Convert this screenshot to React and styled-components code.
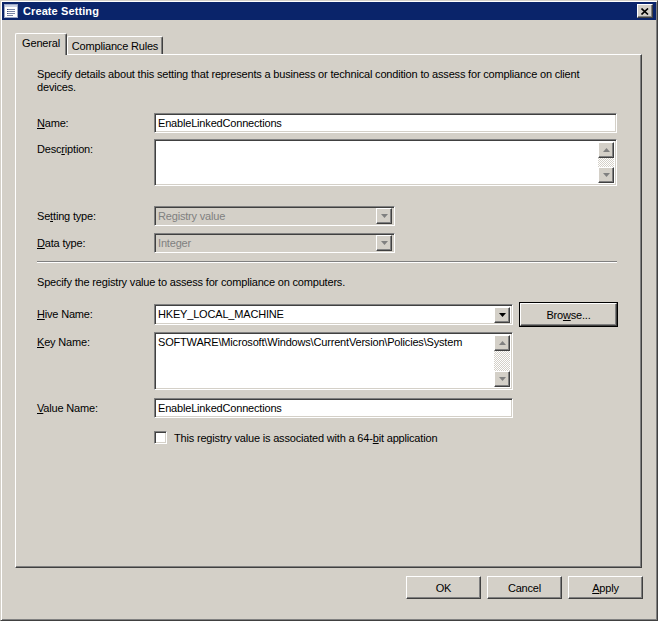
import React from 'react'
import styled, { createGlobalStyle, css } from 'styled-components'

const Global = createGlobalStyle`
  html, body { margin: 0; padding: 0; background: #d4d0c8; }
  body {
    font-family: "Liberation Sans", Arial, sans-serif;
    font-size: 11px;
    letter-spacing: -0.18px;
    color: #000;
  }
`;

const face = '#d4d0c8';

const raised = css`
  background: ${face};
  border: 1px solid;
  border-color: #fff #404040 #404040 #fff;
  box-shadow: inset -1px -1px #808080;
`;

const sunken = css`
  border: 1px solid;
  border-color: #808080 #fff #fff #808080;
  box-shadow: inset 1px 1px #404040, inset -1px -1px ${face};
`;

const Window = styled.div`
  box-sizing: border-box;
  width: 658px;
  height: 621px;
  padding: 1px;
  background: ${face};
  border: 1px solid;
  border-color: ${face} #404040 #404040 ${face};
  box-shadow: inset 1px 1px #fff, inset -1px -1px #808080;
  display: flex;
  flex-direction: column;
`;

const TitleBar = styled.div`
  height: 18px;
  background: #0a246a;
  display: flex;
  align-items: center;
  padding: 0 3px 0 2px;
  color: #fff;
  font-weight: bold;
  font-size: 11px;
  gap: 5px;
`;

const Title = styled.span`
  flex: 1;
  letter-spacing: 0.1px;
`;

const CloseButton = styled.div`
  ${raised};
  box-sizing: border-box;
  width: 16px;
  height: 14px;
  display: flex;
  align-items: center;
  justify-content: center;
`;

const Body = styled.div`
  flex: 1;
  display: flex;
  flex-direction: column;
  padding: 13px 14px 0 13px;
`;

const TabStrip = styled.div`
  display: flex;
  align-items: flex-end;
  height: 21px;
  position: relative;
  z-index: 1;
`;

const Tab = styled.div`
  box-sizing: border-box;
  width: ${p => p.$w}px;
  height: ${p => (p.$active ? 22 : 18)}px;
  margin-bottom: ${p => (p.$active ? -1 : 0)}px;
  background: ${face};
  border-left: 1px solid #fff;
  border-top: 1px solid #fff;
  border-right: 1px solid #404040;
  border-radius: 2px 2px 0 0;
  box-shadow: inset -1px 0 #808080;
  display: flex;
  align-items: ${p => (p.$active ? 'flex-start' : 'center')};
  padding-top: ${p => (p.$active ? 3 : 0)}px;
  justify-content: center;
  white-space: nowrap;
`;

const Panel = styled.div`
  flex: 1;
  box-sizing: border-box;
  border: 1px solid;
  border-color: #fff #404040 #404040 #fff;
  box-shadow: inset -1px -1px #808080;
  padding: 13px 24px 0 21px;
  display: flex;
  flex-direction: column;
`;

const Text = styled.div`
  line-height: 13px;
  margin-top: ${p => p.$mt || 0}px;
`;

const Row = styled.div`
  display: flex;
  align-items: ${p => (p.$top ? 'flex-start' : 'center')};
  margin-top: ${p => p.$mt}px;
`;

const Label = styled.div`
  width: 117px;
  flex: none;
  line-height: 13px;
  padding-top: ${p => (p.$top ? 4 : 0)}px;
`;

const Fields = styled.div`
  display: flex;
  align-items: center;
  gap: 7px;
`;

const Field = styled.div`
  ${sunken};
  box-sizing: border-box;
  width: ${p => p.$w}px;
  height: ${p => p.$h || 20}px;
  background: ${p => (p.$disabled ? face : '#fff')};
  color: ${p => (p.$disabled ? '#808080' : '#000')};
  display: flex;
  align-items: ${p => (p.$multi ? 'stretch' : 'center')};
  padding: 2px;
  line-height: 13px;
`;

const Value = styled.span`
  flex: 1;
  padding: ${p => (p.$multi ? '1px 1px' : '0 1px')};
  white-space: nowrap;
  overflow: hidden;
`;

const DropButton = styled.div`
  ${raised};
  box-sizing: border-box;
  width: 16px;
  height: 16px;
  flex: none;
  display: flex;
  align-items: center;
  justify-content: center;
`;

const ScrollBar = styled.div`
  width: 16px;
  flex: none;
  display: flex;
  flex-direction: column;
`;

const Track = styled.div`
  flex: 1;
  background-image: conic-gradient(#fff 25%, ${face} 0 50%, #fff 0 75%, ${face} 0);
  background-size: 2px 2px;
`;

const Separator = styled.div`
  margin-top: ${p => p.$mt}px;
  height: 1px;
  background: #808080;
  border-bottom: 1px solid #fff;
`;

const Button = styled.div`
  ${raised};
  box-sizing: border-box;
  width: ${p => p.$w || 75}px;
  height: 23px;
  display: flex;
  align-items: center;
  justify-content: center;
  ${p => p.$default && css`
    outline: 1px solid #000;
    outline-offset: 0;
  `}
`;

const CheckRow = styled.div`
  display: flex;
  align-items: center;
  gap: 7px;
  margin: ${p => p.$mt}px 0 0 117px;
`;

const CheckBox = styled.div`
  ${sunken};
  box-sizing: border-box;
  width: 13px;
  height: 13px;
  background: #fff;
`;

const Footer = styled.div`
  display: flex;
  justify-content: flex-end;
  gap: 6px;
  margin-top: 8px;
  padding: 0 13px 20px 0;
  margin-right: -14px;
`;

const U = styled.span`
  text-decoration: underline;
`;

const Arrow = ({ dir = 'down', disabled }) => (
  <svg width="7" height="4" viewBox="0 0 7 4">
    <path
      d={dir === 'down' ? 'M0 0H7L3.5 4Z' : 'M0 4H7L3.5 0Z'}
      fill={disabled ? '#808080' : '#000'}
    />
  </svg>
);

const Scroll = () => (
  <ScrollBar>
    <DropButton><Arrow dir="up" disabled /></DropButton>
    <Track />
    <DropButton><Arrow disabled /></DropButton>
  </ScrollBar>
);

const WindowIcon = () => (
  <svg width="14" height="14" viewBox="0 0 14 14">
    <rect x="0.5" y="0.5" width="13" height="13" fill="#fff" stroke="#9aa6c4" />
    <rect x="1" y="1" width="12" height="2" fill="#c8d0e4" />
    <path d="M3 5.5h8M3 7.5h8M3 9.5h8M3 11.5h6" stroke="#7a86a6" />
    <path d="M3 5.5h1M3 7.5h1M3 9.5h1" stroke="#3a4a7a" />
  </svg>
);

const CloseGlyph = () => (
  <svg width="8" height="7" viewBox="0 0 8 7">
    <path d="M0.5 0.5L7 6.5M7 0.5L0.5 6.5" stroke="#000" strokeWidth="1.6" />
  </svg>
);

const App = () => (
  <>
    <Global />
    <Window>
      <TitleBar>
        <WindowIcon />
        <Title>Create Setting</Title>
        <CloseButton><CloseGlyph /></CloseButton>
      </TitleBar>
      <Body>
        <TabStrip>
          <Tab $w={52} $active>General</Tab>
          <Tab $w={96}>Compliance Rules</Tab>
        </TabStrip>
        <Panel>
          <Text>
            Specify details about this setting that represents a business or technical condition to assess for compliance on client
            <br />
            devices.
          </Text>

          <Row $mt={19}>
            <Label><U>N</U>ame:</Label>
            <Field $w={463}><Value>EnableLinkedConnections</Value></Field>
          </Row>
          <Row $mt={6} $top>
            <Label $top>Desc<U>r</U>iption:</Label>
            <Field $w={463} $h={47} $multi><Value $multi /><Scroll /></Field>
          </Row>
          <Row $mt={20}>
            <Label>Se<U>t</U>ting type:</Label>
            <Field $w={241} $disabled><Value>Registry value</Value><DropButton><Arrow disabled /></DropButton></Field>
          </Row>
          <Row $mt={7}>
            <Label><U>D</U>ata type:</Label>
            <Field $w={241} $disabled><Value>Integer</Value><DropButton><Arrow disabled /></DropButton></Field>
          </Row>

          <Separator $mt={8} />
          <Text $mt={13}>Specify the registry value to assess for compliance on computers.</Text>

          <Row $mt={14}>
            <Label><U>H</U>ive Name:</Label>
            <Fields>
              <Field $w={359} $h={21}><Value>HKEY_LOCAL_MACHINE</Value><DropButton><Arrow /></DropButton></Field>
              <Button $w={97} $default>Bro<U>w</U>se...</Button>
            </Fields>
          </Row>
          <Row $mt={6} $top>
            <Label $top><U>K</U>ey Name:</Label>
            <Field $w={359} $h={58} $multi>
              <Value $multi>SOFTWARE\Microsoft\Windows\CurrentVersion\Policies\System</Value>
              <Scroll />
            </Field>
          </Row>
          <Row $mt={8}>
            <Label><U>V</U>alue Name:</Label>
            <Field $w={359}><Value>EnableLinkedConnections</Value></Field>
          </Row>
          <CheckRow $mt={13}>
            <CheckBox />
            <span>This registry value is associated with a 64-<U>b</U>it application</span>
          </CheckRow>
        </Panel>
        <Footer>
          <Button>OK</Button>
          <Button>Cancel</Button>
          <Button><U>A</U>pply</Button>
        </Footer>
      </Body>
    </Window>
  </>
);

export default App;
